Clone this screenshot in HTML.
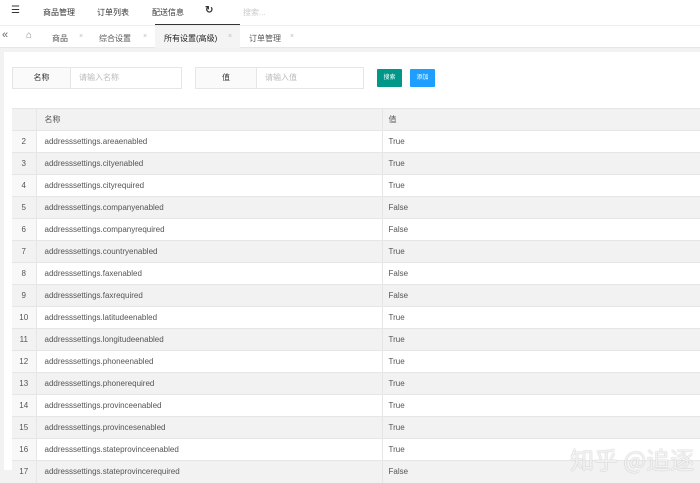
<!DOCTYPE html>
<html><head><meta charset="utf-8"><style>
*{margin:0;padding:0;box-sizing:border-box}
body{width:700px;height:470px;overflow:hidden;background:#f2f2f2;font-family:"Liberation Sans","Noto Sans CJK SC",sans-serif;font-size:8px;color:#333;position:relative}
.top{position:absolute;left:0;top:0;width:700px;height:25px;background:#fff}
.top span{position:absolute;top:7px;font-size:8px;color:#333}
.tabs{position:absolute;left:0;top:25px;width:700px;height:23px;background:#fff;border-top:1px solid #eee;border-bottom:1px solid #e6e6e6}
.tabs span{position:absolute;top:7px;font-size:8px;color:#555}
.tabs .x{color:#bbb;font-size:7px}
.panel{position:absolute;left:4px;top:52px;width:696px;height:418px;background:#fff}
.lbl{position:absolute;height:22px;border:1px solid #e6e6e6;background:#fafafa;text-align:center;line-height:20px;font-size:8px}
.inp{position:absolute;height:22px;border:1px solid #e6e6e6;background:#fff;line-height:20px;padding-left:8px;color:#bbb;font-size:8px}
.btn{position:absolute;top:69px;height:18px;width:25px;color:#fff;text-align:center;line-height:18px;font-size:6px;border-radius:1px}
table{position:absolute;left:12px;top:108px;border-collapse:collapse;width:700px}
td{height:22px;border-top:1px solid #e6e6e6;font-size:8px;color:#555;padding:0}
td.n{width:24px;text-align:center;background:#f8f8f8;border-right:1px solid #e6e6e6}
td.a{width:346px;padding-left:8px;border-right:1px solid #e6e6e6}
td.b{padding-left:6px}
tr.h td{background:#f2f2f2}
tr.g td{background:#f2f2f2}
.wm{position:absolute;left:570px;top:441px;font-size:24px;color:rgba(255,255,255,.85);text-shadow:0 0 1px #999;font-family:"Noto Sans CJK SC",sans-serif;white-space:nowrap}
</style></head><body>
<div class="top">
<span style="left:11px;font-size:10px;top:5px">☰</span>
<span style="left:43px">商品管理</span>
<span style="left:97px">订单列表</span>
<span style="left:152px">配送信息</span>
<span style="left:205px;font-size:10px;top:5px;font-weight:bold">↻</span>
<span style="left:243px;color:#ccc">搜索...</span>
<div style="position:absolute;left:155px;top:24px;width:85px;height:2px;background:#333"></div>
</div>
<div class="tabs">
<span style="left:2px;font-size:11px;top:3px;color:#666">«</span>
<span style="left:26px;font-size:10px;top:4px;color:#888">⌂</span>
<span style="left:52px">商品</span><span class="x" style="left:79px">×</span>
<span style="left:99px">综合设置</span><span class="x" style="left:143px">×</span>
<div style="position:absolute;left:155px;top:0;width:85px;height:22px;background:#f4f4f4"></div>
<span style="left:164px;color:#222">所有设置(高级)</span><span class="x" style="left:228px">×</span>
<span style="left:249px">订单管理</span><span class="x" style="left:290px">×</span>
</div>
<div class="panel"></div>
<div class="lbl" style="left:12px;top:67px;width:59px">名称</div>
<div class="inp" style="left:70px;top:67px;width:112px">请输入名称</div>
<div class="lbl" style="left:195px;top:67px;width:62px">值</div>
<div class="inp" style="left:256px;top:67px;width:108px">请输入值</div>
<div class="btn" style="left:377px;background:#009688">搜索</div>
<div class="btn" style="left:410px;background:#1e9fff">添加</div>
<table>
<tr class="h"><td class="n"></td><td class="a">名称</td><td class="b">值</td></tr>
<tr><td class="n">2</td><td class="a">addresssettings.areaenabled</td><td class="b">True</td></tr>
<tr class="g"><td class="n">3</td><td class="a">addresssettings.cityenabled</td><td class="b">True</td></tr>
<tr><td class="n">4</td><td class="a">addresssettings.cityrequired</td><td class="b">True</td></tr>
<tr class="g"><td class="n">5</td><td class="a">addresssettings.companyenabled</td><td class="b">False</td></tr>
<tr><td class="n">6</td><td class="a">addresssettings.companyrequired</td><td class="b">False</td></tr>
<tr class="g"><td class="n">7</td><td class="a">addresssettings.countryenabled</td><td class="b">True</td></tr>
<tr><td class="n">8</td><td class="a">addresssettings.faxenabled</td><td class="b">False</td></tr>
<tr class="g"><td class="n">9</td><td class="a">addresssettings.faxrequired</td><td class="b">False</td></tr>
<tr><td class="n">10</td><td class="a">addresssettings.latitudeenabled</td><td class="b">True</td></tr>
<tr class="g"><td class="n">11</td><td class="a">addresssettings.longitudeenabled</td><td class="b">True</td></tr>
<tr><td class="n">12</td><td class="a">addresssettings.phoneenabled</td><td class="b">True</td></tr>
<tr class="g"><td class="n">13</td><td class="a">addresssettings.phonerequired</td><td class="b">True</td></tr>
<tr><td class="n">14</td><td class="a">addresssettings.provinceenabled</td><td class="b">True</td></tr>
<tr class="g"><td class="n">15</td><td class="a">addresssettings.provincesenabled</td><td class="b">True</td></tr>
<tr><td class="n">16</td><td class="a">addresssettings.stateprovinceenabled</td><td class="b">True</td></tr>
<tr class="g"><td class="n">17</td><td class="a">addresssettings.stateprovincerequired</td><td class="b">False</td></tr>
</table>
<div class="wm">知乎 @追逐</div>
</body></html>
